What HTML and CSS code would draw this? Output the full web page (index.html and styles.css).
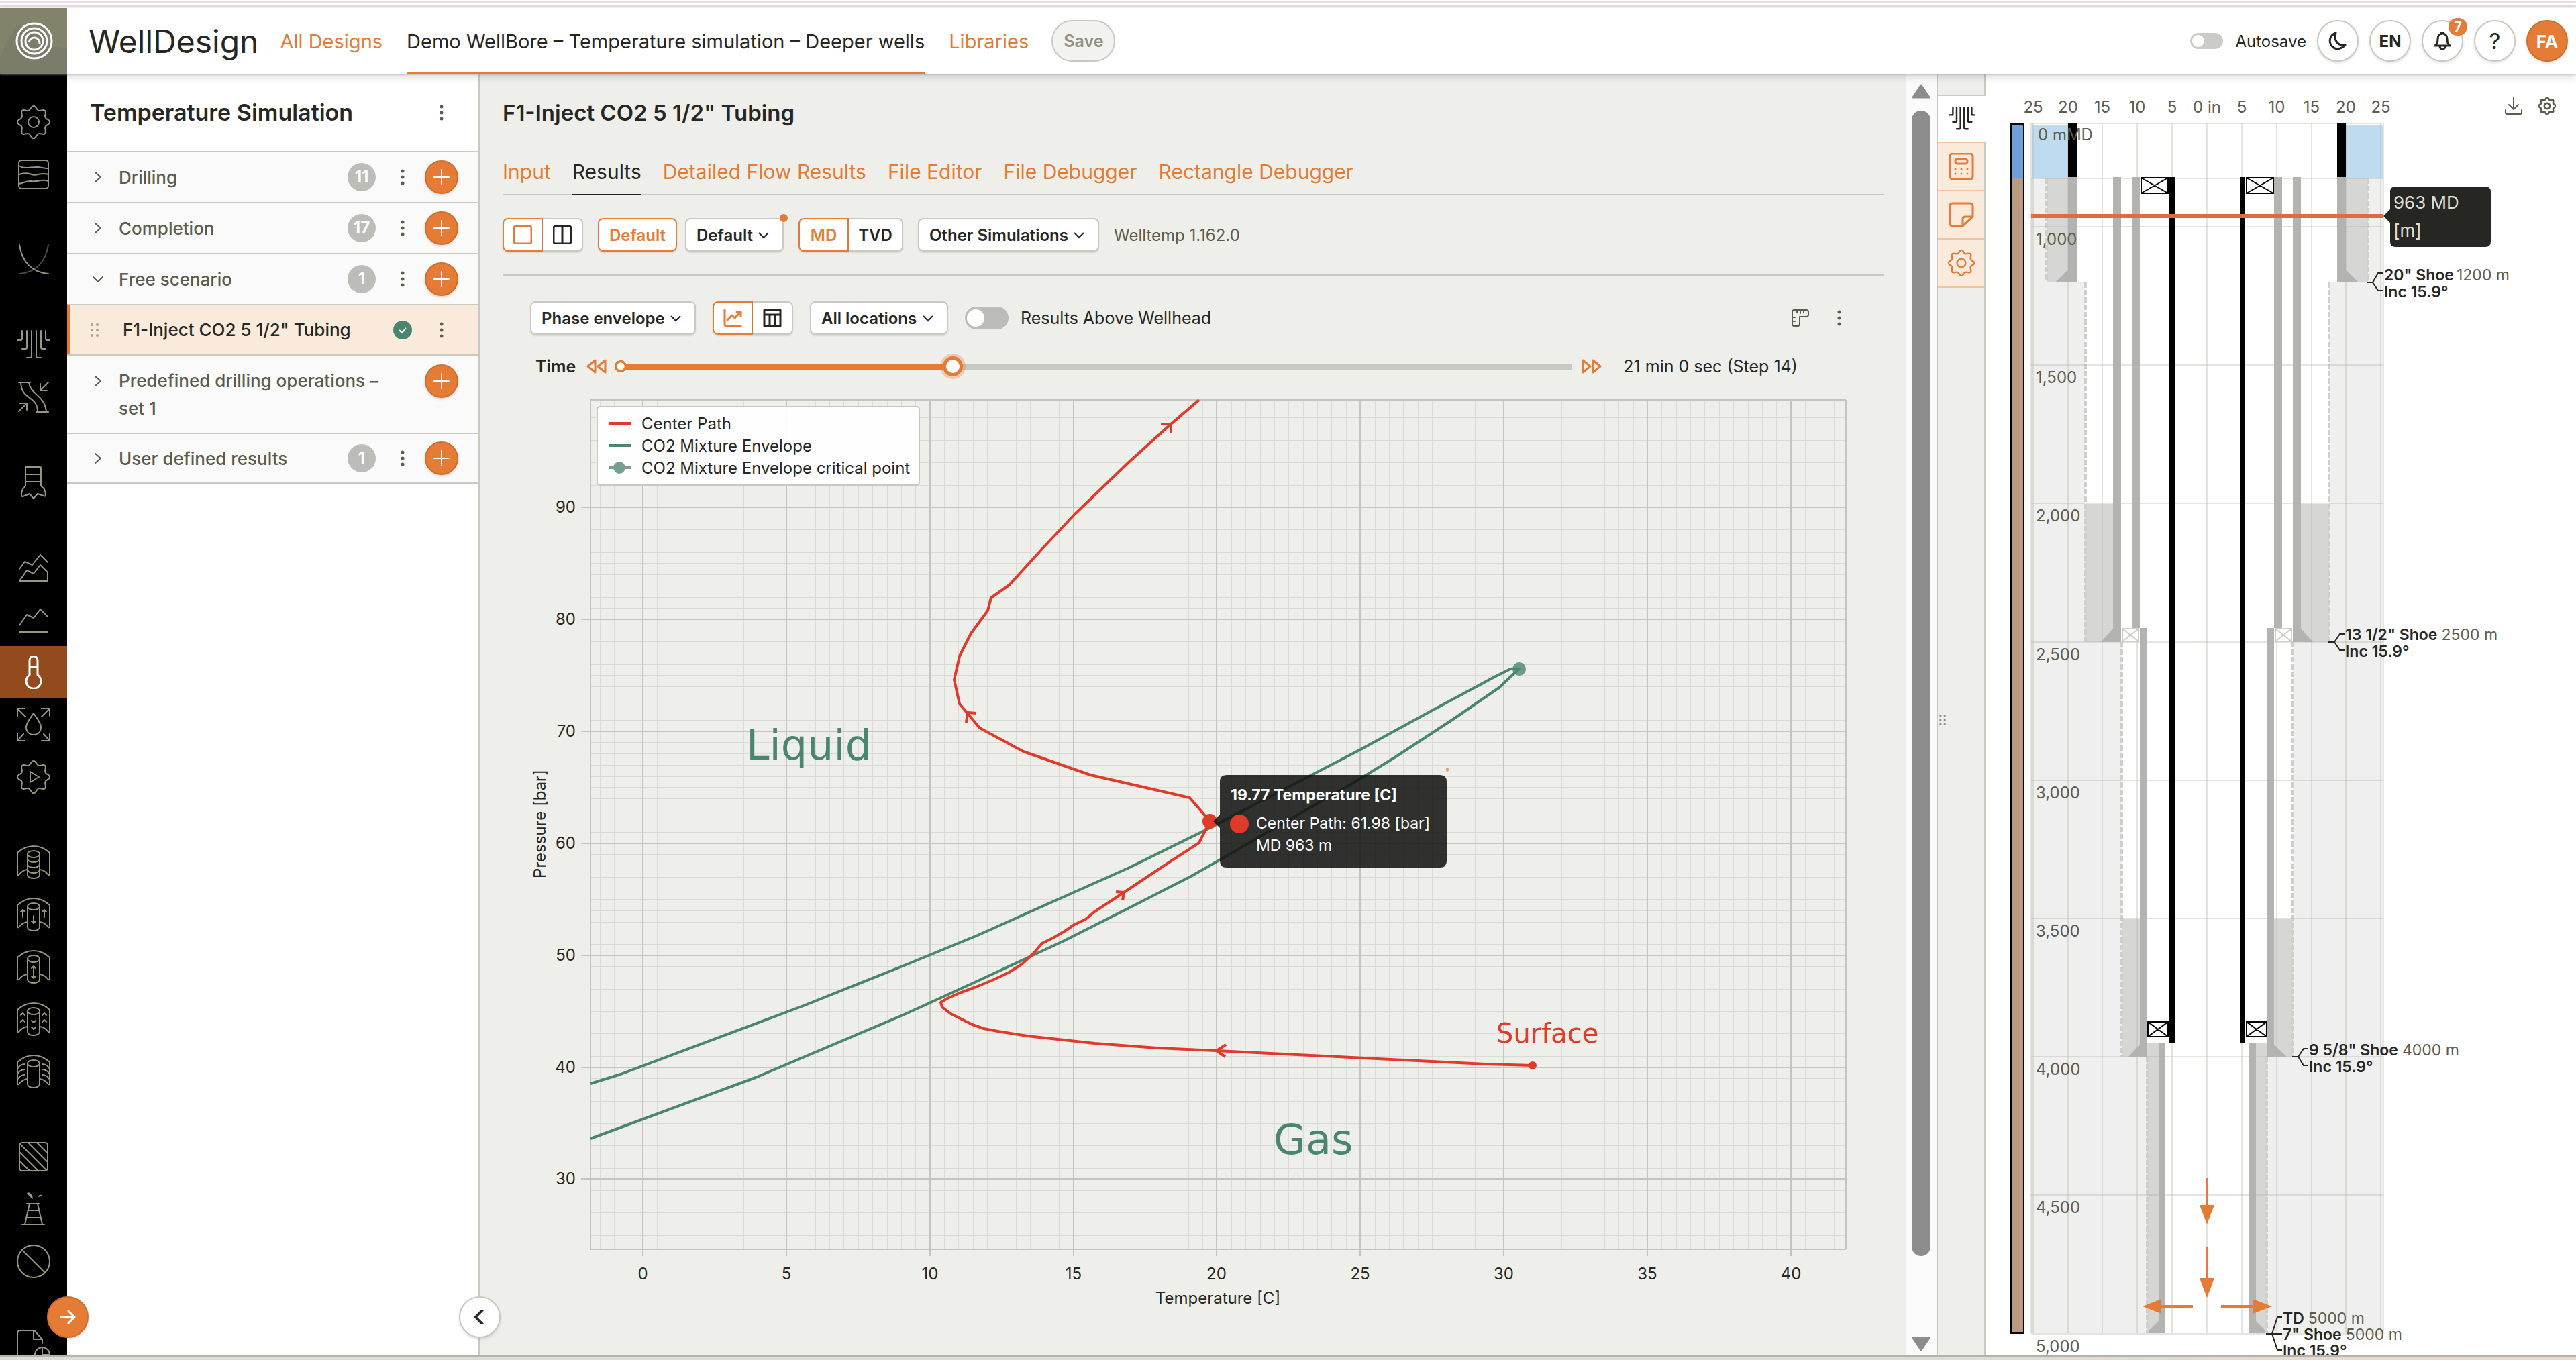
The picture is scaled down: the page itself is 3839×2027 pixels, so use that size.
FILE: index.html
```html
<!DOCTYPE html>
<html lang="en">
<head>
    <meta charset="UTF-8">
    <meta name="viewport" content="width=device-width, initial-scale=1.0">
    <title>WellDesign - Temperature Simulation</title>
    <link rel="stylesheet" href="styles.css">
</head>
<body>
<!-- Icon set -->
<svg class="icon-defs" aria-hidden="true">
    <symbol id="i-cog" viewBox="0 0 50 50">
        <path d="M49 25C49 29 43.9 28.5 42.4 32.2C40.8 35.9 44.8 39.1 42 42C39.1 44.8 35.9 40.8 32.2 42.4C28.5 43.9 29 49 25 49C21 49 21.5 43.9 17.8 42.4C14.1 40.8 10.9 44.8 8 42C5.2 39.1 9.2 35.9 7.6 32.2C6.1 28.5 1 29 1 25C1 21 6.1 21.5 7.6 17.8C9.2 14.1 5.2 10.9 8 8C10.9 5.2 14.1 9.2 17.8 7.6C21.5 6.1 21 1 25 1C29 1 28.5 6.1 32.2 7.6C35.9 9.2 39.1 5.2 42 8C44.8 10.9 40.8 14.1 42.4 17.8C43.9 21.5 49 21 49 25Z"/>
    </symbol>
    <symbol id="i-gear" viewBox="0 0 50 50"><use href="#i-cog"/><circle cx="25" cy="25" r="8"/></symbol>
    <symbol id="i-cogplay" viewBox="0 0 50 50"><use href="#i-cog"/><path d="M20 17L33 25L20 33Z"/></symbol>
    <symbol id="i-layers" viewBox="0 0 50 50">
        <rect x="3" y="4" width="44" height="42" rx="4"/>
        <path d="M3 12C12 18 22 13 32 14C38 15 42 16 47 16M3 25C10 23 16 22 22 25C30 28 36 21 47 25M3 39C10 38 14 34 22 35C30 37 38 31 47 35"/>
    </symbol>
    <symbol id="i-curve" viewBox="0 0 50 50"><path d="M4 3C8 28 22 44 47 46"/><path d="M47 3C43 28 29 44 4 46" opacity=".5"/></symbol>
    <symbol id="i-tubes" viewBox="0 0 50 50">
        <path d="M1 18H6Q8 18 8 16V4M8 31H13Q15 31 15 29V4M15 44H20Q22 44 22 42V4M50 18H45Q43 18 43 16V4M43 31H38Q36 31 36 29V4M36 44H31Q29 44 29 42V4"/>
    </symbol>
    <symbol id="i-pipe" viewBox="0 0 50 50">
        <path d="M3 3H20M6 3C7 30 31 22 31 47M18 3C20 21 42 22 44 47M29 47H47M3 46L15 34M5 34H15V44M47 3L35 15M35 5V15H45"/>
    </symbol>
    <symbol id="i-bit" viewBox="0 0 50 50">
        <path d="M13 30V3Q13 2 14 2H35Q36 2 36 3V30L41 35Q43 40 43 45Q42 46 40 45L31 42L25 49L19 42L9 46Q7 46 7 44Q7 39 9 35ZM13 13H36M13 24H36"/>
    </symbol>
    <symbol id="i-area" viewBox="0 0 50 50"><path d="M4 27L12 16L23 21L35 6L46 17M4 45L15 29L25 34L35 21L46 32V45Z"/></symbol>
    <symbol id="i-line" viewBox="0 0 50 50"><path d="M4 33L15 17L25 22L35 9L46 20M4 43H46"/></symbol>
    <symbol id="i-thermo" viewBox="0 0 50 50"><path d="M19 29V7A6 6 0 0 1 31 7V29A11 11 0 1 1 19 29ZM19 17H31"/></symbol>
    <symbol id="i-drop" viewBox="0 0 50 50">
        <path d="M25 8C29 14 36 22 36 29C36 36 31 40 25 40S14 36 14 29C14 22 21 14 25 8ZM1 12V1H12M1 1L13 13M37 1H49V12M49 1L37 13M1 38V49H12M1 49L10 39M37 49H49V38M49 49L40 39"/>
    </symbol>
    <symbol id="i-well" viewBox="0 0 50 50">
        <path d="M16 36Q8 37 3 44Q1 45 1 43V11Q12 1 25 1T49 11V43Q49 45 47 44Q42 37 34 36M16 13V44A9 5 0 0 0 34 44V13"/>
        <ellipse cx="25" cy="13" rx="9" ry="5"/>
    </symbol>
    <symbol id="i-well1" viewBox="0 0 50 50"><use href="#i-well"/><path d="M16 20A9 5 0 0 0 34 20M16 28A9 5 0 0 0 34 28M16 36A9 5 0 0 0 34 36"/></symbol>
    <symbol id="i-well2" viewBox="0 0 50 50"><use href="#i-well"/><path d="M9 29V18M6 21L9 18L12 21M41 29V18M38 21L41 18L44 21M25 27V38M22 35L25 38L28 35"/></symbol>
    <symbol id="i-well3" viewBox="0 0 50 50"><use href="#i-well"/><path d="M25 24V42M22 27L25 24L28 27M22 39L25 42L28 39"/></symbol>
    <symbol id="i-well4" viewBox="0 0 50 50"><use href="#i-well"/><path d="M6 19L9 16L12 19M6 29L9 26L12 29M38 19L41 16L44 19M38 29L41 26L44 29M22 27L25 30L28 27M22 37L25 40L28 37"/></symbol>
    <symbol id="i-well5" viewBox="0 0 50 50"><use href="#i-well"/><path d="M1 21Q5 14 12 14M1 29Q5 22 12 22M1 37Q5 30 12 30M49 21Q45 14 38 14M49 29Q45 22 38 22M49 37Q45 30 38 30"/></symbol>
    <symbol id="i-hatch" viewBox="0 0 50 50"><rect x="4" y="4" width="42" height="42" rx="4"/><path d="M5 6L44 45M17 4L46 33M30 4L46 20M4 18L32 46M4 31L19 46"/></symbol>
    <symbol id="i-tower" viewBox="0 0 50 50">
        <path d="M15 17H34M8 48H41M19 17L12 48M31 17L38 48M17 27H33M14 38H36"/>
        <path class="solid" d="M15 1Q18 -1 21 2Q24 6 24 10Q20 8 15 1ZM31 7Q33 3 38 4Q36 7 31 7Z"/>
    </symbol>
    <symbol id="i-ban" viewBox="0 0 50 50"><circle cx="25" cy="25" r="24"/><path d="M8 8L42 42"/></symbol>
    <symbol id="i-file" viewBox="0 0 50 50"><path d="M1 50V6Q1 1 6 1H26L38 14V20M25 1V14H38"/><circle cx="38" cy="37" r="11"/><path d="M38 26V37H49"/></symbol>
    <symbol id="i-plus" viewBox="0 0 24 24"><path d="M12 1V23M1 12H23"/></symbol>
    <symbol id="i-kebab" viewBox="0 0 6 24"><circle class="solid" cx="3" cy="3" r="2.5"/><circle class="solid" cx="3" cy="12" r="2.5"/><circle class="solid" cx="3" cy="21" r="2.5"/></symbol>
    <symbol id="i-grip" viewBox="0 0 12 20"><g class="solid"><circle cx="2" cy="2" r="2"/><circle cx="10" cy="2" r="2"/><circle cx="2" cy="10" r="2"/><circle cx="10" cy="10" r="2"/><circle cx="2" cy="18" r="2"/><circle cx="10" cy="18" r="2"/></g></symbol>
    <symbol id="i-right" viewBox="0 0 16 16"><path d="M4 1L12 8L4 15"/></symbol>
    <symbol id="i-down" viewBox="0 0 16 16"><path d="M1 5L8 12L15 5"/></symbol>
    <symbol id="i-left" viewBox="0 0 16 16"><path d="M11 0L3 8L11 16"/></symbol>
    <symbol id="i-arrow" viewBox="0 0 24 20"><path d="M1 10H22M13 1L22 10L13 19"/></symbol>
    <symbol id="i-moon" viewBox="0 0 28 28"><path d="M11 2C3 5 0 13 4 20C8 27 18 28 25 20C14 22 7 12 11 2Z"/></symbol>
    <symbol id="i-bell" viewBox="0 0 24 28"><path d="M1 21Q5 18 5 11C5 6 8 3 12 3S19 6 19 11Q19 18 23 21ZM10 3Q10 1 12 1T14 3M8 21Q8 26 12 26T16 21"/></symbol>
    <symbol id="i-calc" viewBox="0 0 40 40"><rect x="3" y="1" width="34" height="38" rx="4"/><rect x="11" y="9" width="18" height="7" rx="3"/><g class="solid"><circle cx="11" cy="24" r="1.5"/><circle cx="20" cy="24" r="1.5"/><circle cx="29" cy="24" r="1.5"/><circle cx="11" cy="31" r="1.5"/><circle cx="20" cy="31" r="1.5"/><circle cx="29" cy="31" r="1.5"/></g></symbol>
    <symbol id="i-note" viewBox="0 0 40 40"><path d="M7 3H33Q37 3 37 7V23L22 37H7Q3 37 3 33V7Q3 3 7 3ZM22 37V27Q22 23 26 23H37"/></symbol>
    <symbol id="i-download" viewBox="0 0 26 26"><path d="M13 1V18M6 11L13 18L20 11M1 19V23Q1 25 3 25H23Q25 25 25 23V19"/></symbol>
    <symbol id="i-chart" viewBox="0 0 28 28"><path d="M2 2V23Q2 26 5 26H26M6 17L13 10L17 14L26 5M20 5H26V11"/></symbol>
    <symbol id="i-table" viewBox="0 0 28 28"><path d="M2 2H26V26H2ZM2 9H26M10 9V26M18 9V26"/></symbol>
    <symbol id="i-single" viewBox="0 0 28 28"><rect x="1" y="1" width="26" height="26" rx="3"/></symbol>
    <symbol id="i-split" viewBox="0 0 28 28"><rect x="1" y="1" width="26" height="26" rx="3"/><path d="M14 1V27"/></symbol>
    <symbol id="i-ruler" viewBox="0 0 26 26"><path d="M4 1H22Q25 1 25 4V8Q25 11 22 11H12V22Q12 25 9 25H4Q1 25 1 22V4Q1 1 4 1ZM8 1V5M13 1V6M18 1V5M1 12H5M1 18H5"/></symbol>
    <symbol id="i-rewind" viewBox="0 0 30 22"><path d="M13 2V20L2 11ZM28 2V20L17 11Z"/></symbol>
    <symbol id="i-forward" viewBox="0 0 30 22"><path d="M2 2V20L13 11ZM17 2V20L28 11Z"/></symbol>
</svg>

<div class="app">
    <div class="stripes"></div>

    <header class="topbar">
        <a href="#" class="logo" aria-label="Home">
            <svg viewBox="0 0 100 98">
                <path class="logo-ridge" d="M0 72L14 44L26 24L40 34L58 30L76 56L100 60V98H0Z"/>
                <circle cx="51" cy="49" r="26"/>
                <circle cx="51" cy="49" r="19"/>
                <circle cx="51" cy="49" r="13"/>
                <path d="M43 51A8 8 0 1 1 59 53"/>
            </svg>
        </a>
        <h1 class="brand">WellDesign</h1>
        <nav class="topnav">
            <a href="#">All Designs</a>
            <a href="#" class="current">Demo WellBore – Temperature simulation – Deeper wells</a>
            <a href="#">Libraries</a>
        </nav>
        <button type="button" class="save" disabled>Save</button>
        <div class="top-actions">
            <label class="switch switch-small"><input type="checkbox"><span>Autosave</span></label>
            <button type="button" class="round" aria-label="Dark mode"><svg class="icon i28"><use href="#i-moon"/></svg></button>
            <button type="button" class="round">EN</button>
            <button type="button" class="round" aria-label="Notifications"><svg class="icon i28"><use href="#i-bell"/></svg><span class="count">7</span></button>
            <button type="button" class="round help">?</button>
            <button type="button" class="round avatar">FA</button>
        </div>
    </header>

    <div class="workspace">
        <nav class="rail" aria-label="Modules">
            <a href="#"><svg><use href="#i-gear"/></svg></a>
            <a href="#"><svg><use href="#i-layers"/></svg></a>
            <a href="#" class="group"><svg><use href="#i-curve"/></svg></a>
            <a href="#" class="group"><svg><use href="#i-tubes"/></svg></a>
            <a href="#"><svg><use href="#i-pipe"/></svg></a>
            <a href="#" class="group"><svg><use href="#i-bit"/></svg></a>
            <a href="#" class="group"><svg><use href="#i-area"/></svg></a>
            <a href="#"><svg><use href="#i-line"/></svg></a>
            <a href="#" class="active"><svg><use href="#i-thermo"/></svg></a>
            <a href="#"><svg><use href="#i-drop"/></svg></a>
            <a href="#"><svg><use href="#i-cogplay"/></svg></a>
            <a href="#" class="group"><svg><use href="#i-well1"/></svg></a>
            <a href="#"><svg><use href="#i-well2"/></svg></a>
            <a href="#"><svg><use href="#i-well3"/></svg></a>
            <a href="#"><svg><use href="#i-well4"/></svg></a>
            <a href="#"><svg><use href="#i-well5"/></svg></a>
            <a href="#" class="group"><svg><use href="#i-hatch"/></svg></a>
            <a href="#"><svg><use href="#i-tower"/></svg></a>
            <a href="#"><svg><use href="#i-ban"/></svg></a>
            <a href="#" class="group"><svg><use href="#i-file"/></svg></a>
        </nav>

        <aside class="sidebar">
            <div class="side-head">
                <h2>Temperature Simulation</h2>
                <button type="button" class="kebab" aria-label="More"><svg><use href="#i-kebab"/></svg></button>
            </div>
            <div class="side-row">
                <svg class="icon i16"><use href="#i-right"/></svg>
                <span class="side-name">Drilling</span>
                <span class="pill">11</span>
                <button type="button" class="kebab" aria-label="More"><svg><use href="#i-kebab"/></svg></button>
                <button type="button" class="add" aria-label="Add"><svg class="icon i24"><use href="#i-plus"/></svg></button>
            </div>
            <div class="side-row">
                <svg class="icon i16"><use href="#i-right"/></svg>
                <span class="side-name">Completion</span>
                <span class="pill">17</span>
                <button type="button" class="kebab" aria-label="More"><svg><use href="#i-kebab"/></svg></button>
                <button type="button" class="add" aria-label="Add"><svg class="icon i24"><use href="#i-plus"/></svg></button>
            </div>
            <div class="side-row">
                <svg class="icon i16"><use href="#i-down"/></svg>
                <span class="side-name">Free scenario</span>
                <span class="pill">1</span>
                <button type="button" class="kebab" aria-label="More"><svg><use href="#i-kebab"/></svg></button>
                <button type="button" class="add" aria-label="Add"><svg class="icon i24"><use href="#i-plus"/></svg></button>
            </div>
            <div class="side-row selected">
                <svg class="grip"><use href="#i-grip"/></svg>
                <a href="#" class="side-name">F1-Inject CO2 5 1/2" Tubing</a>
                <svg class="check" viewBox="0 0 28 28"><circle cx="14" cy="14" r="14"/><path d="M9 14L13 18L19 11"/></svg>
                <button type="button" class="kebab last" aria-label="More"><svg><use href="#i-kebab"/></svg></button>
            </div>
            <div class="side-row tall">
                <svg class="icon i16"><use href="#i-right"/></svg>
                <span class="side-name">Predefined drilling operations – set 1</span>
                <button type="button" class="add" aria-label="Add"><svg class="icon i24"><use href="#i-plus"/></svg></button>
            </div>
            <div class="side-row">
                <svg class="icon i16"><use href="#i-right"/></svg>
                <span class="side-name">User defined results</span>
                <span class="pill">1</span>
                <button type="button" class="kebab" aria-label="More"><svg><use href="#i-kebab"/></svg></button>
                <button type="button" class="add" aria-label="Add"><svg class="icon i24"><use href="#i-plus"/></svg></button>
            </div>
            <button type="button" class="round avatar expand" aria-label="Expand menu"><svg class="icon i24"><use href="#i-arrow"/></svg></button>
            <button type="button" class="round collapse" aria-label="Collapse panel"><svg class="icon i20"><use href="#i-left"/></svg></button>
        </aside>

        <main class="content">
            <h2 class="page-title">F1-Inject CO2 5 1/2" Tubing</h2>
            <nav class="tabs">
                <a href="#">Input</a>
                <a href="#" class="current">Results</a>
                <a href="#">Detailed Flow Results</a>
                <a href="#">File Editor</a>
                <a href="#">File Debugger</a>
                <a href="#">Rectangle Debugger</a>
            </nav>

            <div class="toolbar">
                <div class="segmented">
                    <button type="button" class="on" aria-label="Single view"><svg class="icon i28"><use href="#i-single"/></svg></button>
                    <button type="button" aria-label="Split view"><svg class="icon i28"><use href="#i-split"/></svg></button>
                </div>
                <button type="button" class="outline">Default</button>
                <span class="picker changed"><select aria-label="Layout"><option>Default</option></select></span>
                <div class="segmented text">
                    <button type="button" class="on">MD</button>
                    <button type="button">TVD</button>
                </div>
                <span class="picker"><select aria-label="Other simulations"><option>Other Simulations</option></select></span>
                <span class="version">Welltemp 1.162.0</span>
            </div>

            <div class="toolbar plot-tools">
                <span class="picker"><select aria-label="Result"><option>Phase envelope</option></select></span>
                <div class="segmented">
                    <button type="button" class="on" aria-label="Chart"><svg class="icon i28"><use href="#i-chart"/></svg></button>
                    <button type="button" aria-label="Table"><svg class="icon i28"><use href="#i-table"/></svg></button>
                </div>
                <span class="picker"><select aria-label="Location"><option>All locations</option></select></span>
                <label class="switch"><input type="checkbox"><span>Results Above Wellhead</span></label>
                <button type="button" class="plain ruler" aria-label="Measure"><svg class="icon i26"><use href="#i-ruler"/></svg></button>
                <button type="button" class="kebab" aria-label="More"><svg><use href="#i-kebab"/></svg></button>
            </div>

            <div class="timebar">
                <label for="time">Time</label>
                <button type="button" class="plain" aria-label="Previous step"><svg class="step"><use href="#i-rewind"/></svg></button>
                <input type="range" id="time" min="0" max="40" value="14">
                <button type="button" class="plain" aria-label="Next step"><svg class="step"><use href="#i-forward"/></svg></button>
                <output for="time">21 min 0 sec (Step 14)</output>
            </div>

            <svg class="chart" viewBox="749 594 2058 1426">
                <g id="chart-grid"></g>
                <path class="envelope" d="M880 1615L925 1601L1200 1498L1350 1438L1457 1394L1571 1343L1681 1294L1799 1236L1926 1170L2026 1118L2134 1059L2227 1009L2251 997H2264L2254 1006L2234 1025L2167 1071L2080 1128L2020 1165L1926 1219L1819 1281L1775 1306L1685 1352L1584 1403L1457 1462L1350 1511L1126 1606L880 1697"/>
                <circle class="critical" cx="2264" cy="997" r="10"/>
                <path class="center" d="M1787 596L1745 632L1682 689L1602 766L1553 818L1504 872L1477 891L1472 910L1447 944L1430 978L1422 1013L1430 1049L1460 1085L1525 1120L1625 1155L1773 1189L1803 1224L1787 1256L1732 1292L1675 1330L1631 1359L1618 1370L1601 1378L1588 1387L1571 1397L1553 1406L1541 1420L1523 1437L1504 1449L1481 1460L1457 1470L1430 1480L1412 1488L1402 1494L1404 1501L1417 1511L1449 1527L1466 1533L1487 1537L1531 1544L1631 1555L1725 1562L1813 1566L2214 1586L2284 1588"/>
                <path class="center" d="M1730 632H1745V645M1455 1063L1442 1062L1440 1077M1663 1329L1675 1330L1673 1342M1827 1557L1813 1566L1826 1575"/>
                <circle class="center-dot" cx="1803" cy="1224" r="11"/>
                <circle class="center-dot" cx="2284" cy="1588" r="6"/>
                <ellipse class="speck" cx="2157" cy="1147" rx="2" ry="3"/>
                <text class="note green" x="1112" y="1132">Liquid</text>
                <text class="note green" x="1898" y="1720">Gas</text>
                <text class="note red" x="2230" y="1554">Surface</text>
                <text class="axis-title" x="1815" y="1943">Temperature [C]</text>
                <text class="axis-title" transform="translate(813 1228) rotate(-90)">Pressure [bar]</text>

                <g class="legend">
                    <rect x="890" y="606" width="480" height="117" rx="4"/>
                    <path class="center" d="M907 631H940"/>
                    <path class="envelope" d="M907 664H940"/>
                    <path class="critical-line" d="M907 697H940"/>
                    <circle class="critical-line" cx="923" cy="697" r="7"/>
                    <text x="956" y="640">Center Path</text>
                    <text x="956" y="673">CO2 Mixture Envelope</text>
                    <text x="956" y="706">CO2 Mixture Envelope critical point</text>
                </g>

                <g class="tip">
                    <path class="tip-box" d="M1828 1155H2146Q2156 1155 2156 1165V1283Q2156 1293 2146 1293H1828Q1818 1293 1818 1283V1234L1808 1224L1818 1214V1165Q1818 1155 1828 1155Z"/>
                    <circle class="center-dot" cx="1847" cy="1228" r="14"/>
                    <text class="tip-title" x="1834" y="1193">19.77 Temperature [C]</text>
                    <text x="1872" y="1235">Center Path: 61.98 [bar]</text>
                    <text x="1872" y="1268">MD 963 m</text>
                </g>
            </svg>
        </main>

        <div class="scroller" aria-hidden="true">
            <svg viewBox="0 0 28 22"><path d="M14 2L26 20H2Z"/></svg>
            <div class="scroll-thumb"></div>
            <svg viewBox="0 0 28 22"><path d="M14 20L26 2H2Z"/></svg>
        </div>

        <nav class="view-tabs" aria-label="Side views">
            <a href="#" class="current"><svg class="icon i40"><use href="#i-tubes"/></svg></a>
            <a href="#"><svg class="icon i40"><use href="#i-calc"/></svg></a>
            <a href="#"><svg class="icon i40"><use href="#i-note"/></svg></a>
            <a href="#"><svg class="icon i40"><use href="#i-gear"/></svg></a>
            <svg class="drag-handle"><use href="#i-grip"/></svg>
        </nav>

        <section class="schematic">
            <div class="schematic-tools">
                <button type="button" class="plain" aria-label="Download"><svg class="icon i26"><use href="#i-download"/></svg></button>
                <button type="button" class="plain" aria-label="Settings"><svg class="icon i26 thick"><use href="#i-gear"/></svg></button>
            </div>
            <svg class="well" viewBox="2959 110 880 1910">
                <!-- Lithology column -->
                <rect class="black" x="2996" y="184" width="21" height="1804"/>
                <rect class="white" x="2998" y="186" width="17" height="2"/>
                <rect class="sea" x="2998" y="187" width="17" height="79"/>
                <rect class="rock" x="2998" y="266" width="17" height="1720"/>

                <!-- Water and formation -->
                <path class="water" d="M3028 187H3082V266H3028ZM3496 187H3551V266H3496Z"/>
                <path class="formation" d="M3027 266H3050V421H3108V957H3162V1575H3200V1987H3027ZM3552 266H3529V421H3471V957H3417V1575H3378V1987H3552Z"/>
                <path class="cement" d="M3050 266H3082V421H3050ZM3496 266H3529V421H3496ZM3108 751H3149V957H3108ZM3429 751H3471V957H3429ZM3162 1369H3189V1575H3162ZM3389 1369H3417V1575H3389ZM3200 1555H3217V1987H3200ZM3362 1555H3378V1987H3362Z"/>
                <path class="casing" d="M3082 264H3095V421H3063L3082 402ZM3483 264H3496V402L3515 421H3483ZM3149 264H3161V957H3131L3149 937ZM3417 264H3429V937L3447 957H3417ZM3178 264H3189V936H3178ZM3389 264H3401V936H3389ZM3189 936H3199V1575H3172L3189 1557ZM3379 936H3389V1557L3408 1575H3379ZM3217 1555H3227V1987H3198L3217 1969ZM3351 1555H3362V1969L3380 1987H3351Z"/>
                <path class="wall" d="M3050 266V421M3529 266V421M3108 421V957M3471 421V957M3162 957V1575M3417 957V1575M3200 1575V1987M3378 1575V1987"/>
                <g id="well-grid"></g>
                <path class="black" d="M3082 184H3095V264H3082ZM3483 184H3496V264H3483ZM3232 264H3241V1555H3232ZM3338 264H3346V1555H3338Z"/>
                <g id="well-labels"></g>

                <!-- Packers -->
                <path class="packer light" d="M3163 937H3187V956H3163ZM3163 937L3187 956M3187 937L3163 956M3391 937H3415V956H3391ZM3391 937L3415 956M3415 937L3391 956"/>
                <path class="packer" d="M3191 265H3231V288H3191ZM3191 265L3231 288M3231 265L3191 288M3348 265H3388V288H3348ZM3348 265L3388 288M3388 265L3348 288"/>
                <path class="packer" d="M3201 1523H3231V1545H3201ZM3201 1523L3231 1545M3231 1523L3201 1545M3348 1523H3378V1545H3348ZM3348 1523L3378 1545M3378 1523L3348 1545"/>

                <!-- Flow arrows -->
                <path class="flow" d="M3289 1756V1798M3289 1858V1906M3268 1947H3220M3310 1947H3358"/>
                <path class="flow-head" d="M3278 1796H3300L3289 1825ZM3278 1905H3300L3289 1934ZM3221 1936V1958L3193 1947ZM3357 1936V1958L3386 1947Z"/>

                <rect class="marker" x="3027" y="319" width="525" height="6"/>
                <path class="depth-tip" d="M3570 278H3704Q3712 278 3712 286V360Q3712 368 3704 368H3570Q3562 368 3562 360V332L3552 322L3562 312V286Q3562 278 3570 278Z"/>
                <text class="depth-text" x="3567" y="311">963 MD</text>
                <text class="depth-text" x="3567" y="353">[m]</text>

                <path class="leader" d="M3527 421H3536L3544 407H3551M3536 421L3544 433H3551"/>
                <text class="shoe" x="3553" y="418">20" Shoe<tspan dx="4">1200 m</tspan></text>
                <text class="shoe" x="3553" y="443">Inc 15.9°</text>
                <path class="leader" d="M3470 957H3479L3487 945H3494M3479 957L3487 969H3494"/>
                <text class="shoe" x="3495" y="954">13 1/2" Shoe<tspan dx="6">2500 m</tspan></text>
                <text class="shoe" x="3495" y="979">Inc 15.9°</text>
                <path class="leader" d="M3416 1575H3425L3433 1563H3440M3425 1575L3433 1588H3440"/>
                <text class="shoe" x="3441" y="1573">9 5/8" Shoe<tspan dx="6">4000 m</tspan></text>
                <text class="shoe" x="3441" y="1598">Inc 15.9°</text>
                <path class="leader" d="M3377 1988H3401M3386 1988L3394 1963H3401M3386 1988L3394 2012H3401"/>
                <text class="shoe" x="3402" y="1973">TD<tspan dx="6">5000 m</tspan></text>
                <text class="shoe" x="3402" y="1997">7" Shoe<tspan dx="6">5000 m</tspan></text>
                <text class="shoe" x="3402" y="2021">Inc 15.9°</text>
            </svg>
        </section>
    </div>

    <div class="bottom-edge"></div>
</div>
<script src="script.js"></script>
</body>
</html>
```
FILE: styles.css
```css
* {
    box-sizing: border-box;
}
body {
    margin: 0;
    font-family: Inter, "Liberation Sans", sans-serif;
    font-size: 24px;
    color: #262622;
    background: #fff;
    overflow: hidden;
}
a {
    color: #e57b35;
    text-decoration: none;
}
button, select {
    font: inherit;
    color: inherit;
    cursor: pointer;
}
h1, h2 {
    margin: 0;
}
.app {
    display: flex;
    flex-direction: column;
    height: 100vh;
}
.stripes {
    height: 12px;
    background: linear-gradient(#fff 2px, #ecdfe4 2px 5px, #fff 5px 8px, #ecdfe4 8px 11px, #fff 11px);
}
.bottom-edge {
    height: 7px;
    border-top: 2px solid #b4b4ae;
    background: linear-gradient(90deg, #dcdcd5 75%, #eed9c4);
}

/* Icons */
.icon-defs {
    position: absolute;
    width: 0;
    height: 0;
}
.icon, .rail svg, .step {
    fill: none;
    stroke: currentColor;
    stroke-width: 2;
    stroke-linecap: round;
    stroke-linejoin: round;
    flex: none;
}
.solid {
    fill: currentColor;
    stroke: none;
}
.i16 { width: 16px; height: 16px; }
.i20 { width: 20px; height: 20px; }
.i24 { width: 24px; height: 24px; }
.i26 { width: 26px; height: 26px; }
.i28 { width: 28px; height: 28px; }
.i40 { width: 40px; height: 40px; }
.thick { stroke-width: 5; }

/* Top bar */
.topbar {
    display: flex;
    align-items: center;
    height: 98px;
    flex: none;
    position: relative;
    z-index: 3;
    background: #fff;
    box-shadow: 0 1px 2px #a9a9a4, 0 3px 12px rgba(0, 0, 0, 0.2);
}
.logo {
    width: 100px;
    height: 98px;
    background: #83826a;
}
.logo svg {
    display: block;
    fill: none;
    stroke: #fff;
    stroke-width: 3;
}
.logo .logo-ridge {
    fill: #7b7c69;
    stroke: none;
}
.brand {
    margin-left: 32px;
    font-size: 48px;
    font-weight: 400;
}
.topnav {
    display: flex;
    gap: 36px;
    margin-left: 32px;
    font-size: 29px;
    height: 98px;
}
.topnav a {
    display: flex;
    align-items: center;
    border-bottom: 2px solid transparent;
    padding-top: 2px;
}
.topnav .current {
    color: #262622;
    border-color: #e57b35;
}
.save {
    height: 62px;
    margin-left: 34px;
    padding: 0 16px;
    border: 2px solid #c9c9c1;
    border-radius: 31px;
    background: #f2f2f1;
    color: #92917b;
    font-size: 25px;
    font-weight: 600;
}
.top-actions {
    display: flex;
    align-items: center;
    gap: 16px;
    margin: 0 12px 0 auto;
}
.round {
    display: flex;
    align-items: center;
    justify-content: center;
    position: relative;
    width: 62px;
    height: 62px;
    padding: 0;
    border: 2px solid #c9c9c1;
    border-radius: 50%;
    background: #fff;
    font-weight: 700;
    box-shadow: 0 2px 4px rgba(0, 0, 0, 0.12);
}
.round .icon {
    stroke-width: 3;
}
.help {
    font-size: 33px;
    font-weight: 400;
}
.avatar {
    color: #fff;
    font-size: 26px;
    background: #e57b35;
    border-color: #c9702f;
}
.count {
    position: absolute;
    top: -5px;
    right: -8px;
    min-width: 28px;
    height: 26px;
    border-radius: 13px;
    background: #e57b35;
    color: #fff;
    font-size: 20px;
    line-height: 26px;
}
.switch {
    display: flex;
    align-items: center;
    gap: 18px;
    font-size: 25px;
}
.switch input {
    appearance: none;
    position: relative;
    width: 65px;
    height: 34px;
    margin: 0;
    border-radius: 17px;
    background: #bcbcb8;
}
.switch input::before {
    content: "";
    position: absolute;
    left: 3px;
    top: 4px;
    width: 26px;
    height: 26px;
    border-radius: 50%;
    background: #fff;
}
.switch-small {
    font-size: 24px;
}
.switch-small input {
    width: 49px;
    height: 24px;
    background: #cbcbc8;
}
.switch-small input::before {
    top: 3px;
    width: 18px;
    height: 18px;
}

/* Columns */
.workspace {
    display: flex;
    flex: 1;
    min-height: 0;
}
.rail {
    width: 100px;
    flex: none;
    padding-top: 33px;
    background: #000;
    overflow: hidden;
}
.rail a {
    display: flex;
    align-items: center;
    justify-content: center;
    height: 78px;
    color: #97967f;
}
.rail svg {
    width: 50px;
    height: 50px;
}
.rail .group {
    margin-top: 49px;
}
.rail .active {
    background: #934a1c;
    color: #fff;
}
.rail .active svg {
    stroke-width: 3;
}
.sidebar {
    position: relative;
    width: 615px;
    flex: none;
    border-right: 2px solid #c9c9c1;
    background: #fff;
}
.side-head {
    display: flex;
    align-items: center;
    justify-content: space-between;
    height: 115px;
    padding: 0 30px 0 34px;
}
.side-head h2 {
    font-size: 34px;
    font-weight: 600;
}
.page-title {
    font-size: 33px;
    font-weight: 600;
}
.side-row {
    display: flex;
    align-items: center;
    min-height: 76px;
    padding: 0 30px 0 38px;
    border-top: 2px solid #c9c9c1;
    background: #fafafa;
    color: #5c5c4c;
    font-size: 26px;
    line-height: 41px;
    font-weight: 500;
}
.side-row:nth-of-type(7) {
    border-bottom: 2px solid #c9c9c1;
}
.side-name {
    flex: 1;
    margin-left: 23px;
}
.pill {
    width: 42px;
    height: 42px;
    border-radius: 50%;
    background: #bcbcb8;
    color: #fff;
    font-size: 24px;
    font-weight: 700;
    text-align: center;
}
.kebab {
    width: 50px;
    height: 50px;
    padding: 0;
    border: 0;
    background: none;
    color: #5c5c4c;
}
.kebab svg {
    display: block;
    width: 6px;
    height: 24px;
    margin: auto;
}
.side-row .kebab {
    margin: 0 8px 0 15px;
}
.side-row .kebab.last {
    margin: 0 0 0 19px;
}
.side-head .kebab {
    margin-right: 0;
}
.add {
    display: flex;
    align-items: center;
    justify-content: center;
    width: 50px;
    height: 50px;
    padding: 0;
    border: 2px solid #c9702f;
    border-radius: 50%;
    background: #e57b35;
    color: #fff;
    box-shadow: 0 2px 4px rgba(0, 0, 0, 0.15);
}
.selected {
    min-height: 75px;
    padding-left: 31px;
    border-left: 4px solid #e57b35;
    background: #faeadc;
}
.selected .side-name {
    margin-left: 36px;
    color: #262622;
}
.grip {
    width: 12px;
    height: 20px;
    color: #a5a493;
}
.check {
    width: 28px;
    height: 28px;
    fill: #4a866d;
}
.check path {
    fill: none;
    stroke: #fff;
    stroke-width: 2;
}
.tall {
    align-items: flex-start;
    padding-top: 17px;
    padding-bottom: 16px;
}
.tall .icon {
    margin-top: 13px;
}
.tall .add .icon {
    margin-top: 0;
}
.tall .side-name {
    padding-right: 50px;
}
.tall .add {
    margin-top: -4px;
}
.expand, .collapse {
    position: absolute;
    bottom: 26px;
    z-index: 2;
}
.expand {
    left: -30px;
}
.collapse {
    right: -33px;
}

/* Main content */
.content {
    flex: 1;
    min-width: 0;
    padding: 0 33px 0 34px;
    background: #eeefea;
}
.page-title {
    height: 116px;
    line-height: 116px;
}
.tabs {
    display: flex;
    gap: 32px;
    height: 65px;
    border-bottom: 2px solid #c9c9c1;
    font-size: 30px;
    line-height: 61px;
}
.tabs .current {
    color: #262622;
    border-bottom: 2px solid #262622;
    height: 65px;
}
.toolbar {
    display: flex;
    align-items: center;
    height: 120px;
    border-bottom: 2px solid #c9c9c1;
}
.plot-tools {
    height: 87px;
    padding: 39px 41px 0;
    border: 0;
}
.segmented {
    display: flex;
    margin-right: 22px;
}
.segmented button, .outline, .picker select {
    height: 50px;
    border: 2px solid #c9c9c1;
    border-radius: 8px;
    background: #fff;
    font-weight: 600;
    box-shadow: 0 2px 2px rgba(0, 0, 0, 0.1);
}
.segmented button {
    display: flex;
    align-items: center;
    justify-content: center;
    width: 60px;
    padding: 0;
    border-left: 0;
    border-radius: 0 8px 8px 0;
}
.segmented .icon {
    stroke-width: 3;
}
.segmented .on {
    border: 2px solid #e57b35;
    border-radius: 8px 0 0 8px;
    color: #e57b35;
}
.segmented.text button {
    width: 81px;
}
.segmented.text .on {
    width: 75px;
}
.outline {
    margin-right: 12px;
    padding: 0 15px;
    border-color: #e57b35;
    color: #e57b35;
}
.picker {
    position: relative;
    margin-right: 22px;
}
.picker select {
    appearance: none;
    padding: 0 44px 0 15px;
    background: #fff url("data:image/svg+xml,%3Csvg xmlns='http://www.w3.org/2000/svg' viewBox='0 0 16 16' fill='none' stroke='%23262622' stroke-width='2'%3E%3Cpath d='M1 5l7 7 7-7'/%3E%3C/svg%3E") no-repeat right 20px center / 16px 16px;
}
.changed::after {
    content: "";
    position: absolute;
    top: -6px;
    right: -6px;
    width: 12px;
    height: 12px;
    border-radius: 50%;
    background: #e57b35;
}
.version {
    color: #5c5c4c;
}
.plot-tools .picker, .plot-tools .segmented {
    margin-right: 25px;
}
.plain {
    display: flex;
    padding: 0;
    border: 0;
    background: none;
    color: #5c5c4c;
}
.ruler {
    margin: 0 20px 0 auto;
}
.timebar {
    display: flex;
    align-items: center;
    height: 96px;
    padding: 0 0 0 49px;
}
.timebar label {
    margin-right: 16px;
    font-size: 25px;
    font-weight: 600;
}
.step {
    width: 30px;
    height: 26px;
    color: #e57b35;
    stroke-width: 3;
}
.timebar input {
    appearance: none;
    width: 1427px;
    height: 38px;
    margin: 0 14px 0 12px;
    background: radial-gradient(circle at 9px 19px, #fff 5px, #e57b35 6px 9px, transparent 9px), linear-gradient(90deg, #e57b35 35%, #c9c9c1 35%) 8px 15px / calc(100% - 8px) 9px no-repeat;
}
.timebar input::-webkit-slider-thumb {
    appearance: none;
    width: 30px;
    height: 30px;
    border: 5px solid #e57b35;
    border-radius: 50%;
    background: #fff;
    box-shadow: 0 0 0 4px rgba(229, 123, 53, 0.3);
}
.timebar output {
    margin-left: 32px;
    font-size: 25px;
}

/* Chart */
.chart, .well {
    display: block;
    width: 100%;
    height: auto;
    fill: #262622;
}
.grid-minor {
    stroke: #dadbd5;
    stroke-width: 1;
}
.grid-major {
    stroke: #c4c5bf;
    stroke-width: 2;
}
.tick {
    text-anchor: middle;
}
.tick-y {
    text-anchor: end;
}
.axis-title {
    text-anchor: middle;
}
.envelope, .center, .critical-line {
    fill: none;
    stroke: #4a866d;
    stroke-width: 4;
    stroke-linejoin: round;
}
.center {
    stroke: #e13a2b;
}
.critical {
    fill: #4a866d;
    opacity: 0.8;
}
.critical-line {
    stroke: #74a18d;
    fill: #74a18d;
}
.center-dot {
    fill: #e13a2b;
}
.speck {
    fill: #e57b35;
    opacity: 0.7;
}
.note {
    font-family: "DejaVu Sans", sans-serif;
    font-size: 62px;
}
.green {
    fill: #4a866d;
}
.red {
    fill: #e13a2b;
    font-size: 40px;
}
.legend rect {
    fill: #fff;
    fill-opacity: 0.93;
    stroke: #c9c9c1;
    stroke-width: 2;
}
.tip text {
    fill: #fff;
    font-size: 23px;
}
.tip .tip-title {
    font-weight: 700;
}
.tip-box {
    fill: #141411;
    opacity: 0.87;
}

/* Scrollbar and side view tabs */
.scroller {
    display: flex;
    flex-direction: column;
    align-items: center;
    width: 46px;
    padding: 15px 0 6px;
    background: #fafafa;
}
.scroller svg {
    width: 30px;
    height: 22px;
    fill: #8c8c8c;
    stroke: #8c8c8c;
    stroke-width: 3;
    stroke-linejoin: round;
}
.scroll-thumb {
    flex: 1;
    width: 28px;
    margin: 18px 0 120px;
    border-radius: 14px;
    background: #8c8c8c;
}
.view-tabs {
    position: relative;
    width: 73px;
    padding-top: 31px;
    border: 2px solid #c9c9c1;
    border-width: 0 2px;
    background: #eeefea;
}
.view-tabs a {
    display: flex;
    align-items: center;
    justify-content: center;
    height: 72px;
    border-bottom: 2px solid #f2c39f;
    background: #faeadc;
}
.view-tabs .icon {
    stroke-width: 3;
}
.view-tabs .current {
    margin-right: -2px;
    border-top: 2px solid #c9c9c1;
    background: #fff;
    color: #262622;
}
.drag-handle {
    position: absolute;
    left: 2px;
    top: 50%;
    width: 10px;
    height: 16px;
    color: #8c8c80;
}

/* Well schematic */
.schematic {
    position: relative;
    width: 880px;
    flex: none;
    overflow: hidden;
}
.schematic-tools {
    position: absolute;
    top: 35px;
    right: 30px;
    display: flex;
    gap: 24px;
}
.black { fill: #000; }
.white { fill: #fff; }
.sea { fill: #6ba0dc; }
.rock { fill: #b89b82; }
.water { fill: #bfdbf0; }
.formation { fill: #efefef; }
.cement { fill: #d6d6d4; }
.casing { fill: #b3b3b1; }
.wall {
    stroke: #d0d0cb;
    stroke-width: 4;
    stroke-dasharray: 8 3;
}
.well-line {
    stroke: #b4b4a5;
    stroke-opacity: 0.35;
    stroke-width: 2;
}
.well-label {
    fill: #5c5c4c;
}
.packer {
    fill: #fff;
    stroke: #000;
    stroke-width: 2;
}
.packer.light {
    stroke: #cfcfcc;
}
.flow {
    stroke: #e57b35;
    stroke-width: 4;
}
.flow-head {
    fill: #e57b35;
}
.marker {
    fill: #db6c43;
}
.depth-tip {
    fill: #262622;
}
.depth-text {
    fill: #dededa;
    font-size: 26px;
}
.leader {
    fill: none;
    stroke: #262622;
    stroke-width: 2;
}
.shoe {
    font-size: 23px;
    font-weight: 600;
}
.shoe tspan {
    font-weight: 400;
    fill: #5c5c4c;
}
```
FILE: script.js
```js
const NS = "http://www.w3.org/2000/svg";

function add(parent, tag, cls, attrs, text) {
    const el = document.createElementNS(NS, tag);
    el.setAttribute("class", cls);
    for (const key in attrs) el.setAttribute(key, attrs[key]);
    if (text) el.textContent = text;
    parent.appendChild(el);
}

function line(parent, cls, x1, y1, x2, y2) {
    add(parent, "line", cls, { x1, y1, x2, y2 });
}

function drawChartGrid() {
    const g = document.getElementById("chart-grid");
    const box = { left: 880, right: 2751, top: 596, bottom: 1862 };
    const px = t => Math.round(958 + t * 42.77);
    const py = p => Math.round(756 + (90 - p) * 16.69);

    for (let t = -1.5; t < 42; t += 0.5) {
        if (t % 5 !== 0) line(g, "grid-minor", px(t) + 0.5, box.top, px(t) + 0.5, box.bottom);
    }
    for (let p = 24; p < 100; p++) {
        if (p % 10 !== 0) line(g, "grid-minor", box.left, py(p) + 0.5, box.right, py(p) + 0.5);
    }
    for (let t = 0; t <= 40; t += 5) {
        line(g, "grid-major", px(t), box.top, px(t), box.bottom + 10);
        add(g, "text", "tick", { x: px(t), y: 1907 }, String(t));
    }
    for (let p = 30; p <= 90; p += 10) {
        line(g, "grid-major", box.left - 14, py(p), box.right, py(p));
        add(g, "text", "tick-y", { x: 858, y: py(p) + 8 }, String(p));
    }
    line(g, "grid-major", box.left, box.top, box.right, box.top);
    line(g, "grid-major", box.left, box.bottom, box.right, box.bottom);
    line(g, "grid-major", box.left, box.top, box.left, box.bottom);
    line(g, "grid-major", box.right, box.top, box.right, box.bottom);
}

function drawWellGrid() {
    const g = document.getElementById("well-grid");
    const labels = document.getElementById("well-labels");
    for (let i = -5; i <= 5; i++) {
        const x = Math.round(3289 + i * 51.85);
        line(g, "well-line", x, 184, x, 1987);
        add(labels, "text", "well-label tick", { x, y: 168 }, i === 0 ? "0 in" : String(Math.abs(i) * 5));
    }
    line(g, "well-line", 3027, 184, 3027, 1987);
    line(g, "well-line", 3552, 184, 3552, 1987);
    line(g, "well-line", 3027, 184, 3552, 184);
    line(g, "well-line", 3027, 266, 3552, 266);
    add(labels, "text", "well-label", { x: 3037, y: 209 }, "0 mMD");
    for (let md = 1000; md <= 5000; md += 500) {
        const y = Math.round(338 + (md - 1000) * 0.4124);
        line(g, "well-line", 3027, y, 3552, y);
        add(labels, "text", "well-label", { x: 3034, y: y + 27 }, md.toLocaleString("en-US"));
    }
}

drawChartGrid();
drawWellGrid();
```
